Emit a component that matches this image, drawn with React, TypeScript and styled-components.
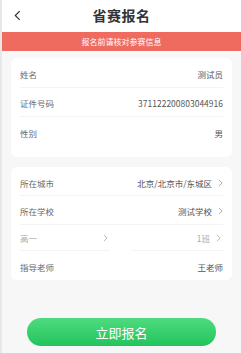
import React from "react";
import styled, { createGlobalStyle } from "styled-components";

const GlobalStyle = createGlobalStyle`
    html, body {
        margin: 0;
        padding: 0;
        background: #f7f7f7;
    }
    body {
        font-family: "Noto Sans CJK SC", "Noto Sans", sans-serif;
    }
`;

interface IRow {
    label: string;
    value: string;
}

const baseInfo: IRow[] = [
    { label: '姓名', value: '测试员' },
    { label: '证件号码', value: '371122200803044916' },
    { label: '性别', value: '男' },
];

const Chevron = ({ color = '#999' }: { color?: string }) => (
    <ChevronSvg viewBox="0 0 6 10" width="5" height="8">
        <polyline points="1,1 5,5 1,9" fill="none" stroke={color} strokeWidth="1" />
    </ChevronSvg>
);

const App = () => {
    return (
        <>
            <GlobalStyle />
            <Page>
                <Header>
                    <BackBtn>
                        <svg viewBox="0 0 8 12" width="7" height="11">
                            <polyline points="6.5,1 1.5,6 6.5,11" fill="none" stroke="#333" strokeWidth="1.4" />
                        </svg>
                    </BackBtn>
                    <Title>省赛报名</Title>
                </Header>
                <Notice>报名前请核对参赛信息</Notice>

                <Content>
                    <Card $pb={11}>
                        {baseInfo.map((row, i) => (
                            <Row key={row.label} $h={29} $last={i === baseInfo.length - 1}>
                                <Label>{row.label}</Label>
                                <Value>{row.value}</Value>
                            </Row>
                        ))}
                    </Card>

                    <Card $pb={0}>
                        <Row $h={28}>
                            <Label>所在城市</Label>
                            <Value>北京/北京市/东城区<Chevron /></Value>
                        </Row>
                        <Row $h={29}>
                            <Label>所在学校</Label>
                            <Value>测试学校<Chevron /></Value>
                        </Row>
                        <SplitRow>
                            <Half>
                                <Label $muted>高一</Label>
                                <Chevron color="#aaa" />
                            </Half>
                            <Half $right>
                                <Value $muted>1班<Chevron color="#aaa" /></Value>
                            </Half>
                        </SplitRow>
                        <Row $h={29} $last>
                            <Label>指导老师</Label>
                            <Value>王老师</Value>
                        </Row>
                    </Card>
                </Content>

                <Footer>
                    <SubmitBtn>立即报名</SubmitBtn>
                </Footer>
            </Page>
        </>
    );
}

const Page = styled.div`
    width: 241px;
    min-height: 353px;
    box-sizing: border-box;
    border-left: 2px solid #e8e8e8;
    background: #f7f7f7;
`;

const Header = styled.div`
    position: relative;
    display: flex;
    align-items: center;
    justify-content: center;
    height: 32px;
    background: #fff;
`;

const BackBtn = styled.div`
    position: absolute;
    left: 12px;
    top: 10px;
    display: flex;
`;

const Title = styled.h1`
    margin: 0;
    color: #333;
    font-size: 14px;
    font-weight: 700;
    letter-spacing: 0.5px;
    margin-top: -2px;
`;

const Notice = styled.div`
    display: flex;
    align-items: center;
    justify-content: center;
    height: 19px;
    color: #fff;
    font-size: 8px;
    background: #ef6a5f;
    border-bottom: 2px solid #fbfbfb;
`;

const Content = styled.div`
    display: flex;
    flex-direction: column;
    gap: 10px;
    padding: 5px 9px 0 9px;
`;

const Card = styled.div<{ $pb: number }>`
    padding: 1px 9px ${props => props.$pb}px 9px;
    background: #fff;
    border-radius: 6px;
`;

const Row = styled.div<{ $h: number; $last?: boolean }>`
    display: flex;
    align-items: center;
    justify-content: space-between;
    height: ${props => props.$h}px;
    box-sizing: border-box;
    padding-top: 2px;
    border-bottom: ${props => props.$last ? 'none' : '1px solid #f3f3f3'};
`;

const SplitRow = styled.div`
    display: flex;
    justify-content: space-between;
    height: 26px;
`;

const Half = styled.div<{ $right?: boolean }>`
    display: flex;
    align-items: center;
    justify-content: ${props => props.$right ? 'flex-end' : 'space-between'};
    width: ${props => props.$right ? '92px' : '90px'};
    box-sizing: border-box;
    padding-right: 2px;
    border-bottom: 1px solid #f3f3f3;
`;

const Label = styled.span<{ $muted?: boolean }>`
    color: ${props => props.$muted ? '#aaa' : '#6a6a6a'};
    font-size: 8.5px;
`;

const Value = styled.span<{ $muted?: boolean }>`
    display: flex;
    align-items: center;
    gap: 6px;
    color: ${props => props.$muted ? '#aaa' : '#555'};
    font-size: 8.5px;
`;

const ChevronSvg = styled.svg`
    display: block;
`;

const Footer = styled.div`
    display: flex;
    justify-content: center;
    padding: 38px 0 9px;
`;

const SubmitBtn = styled.button`
    width: 189px;
    height: 28px;
    color: #fff;
    font-family: inherit;
    font-size: 13px;
    background: linear-gradient(180deg, #4fdb7f 0%, #22c45c 100%);
    border: none;
    border-radius: 14px;
    cursor: pointer;
`;

export default App;
